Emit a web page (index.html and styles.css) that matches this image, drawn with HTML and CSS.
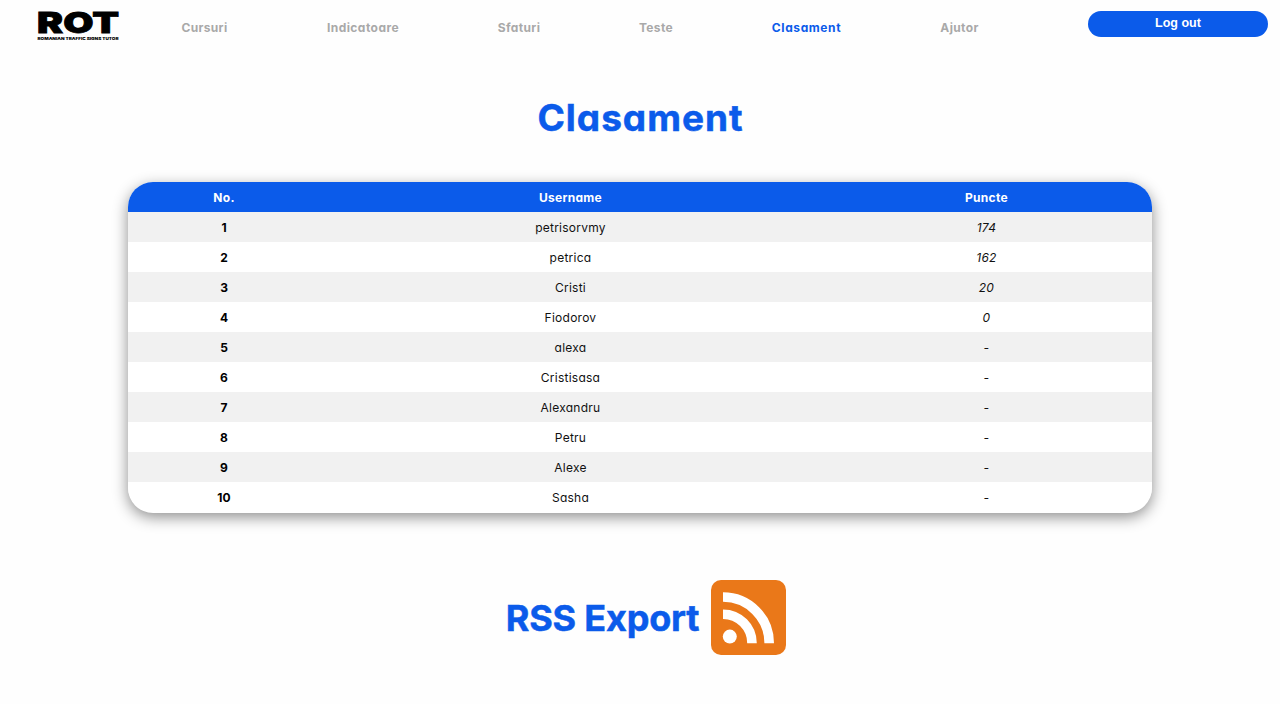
FILE: index.html
```html
<!DOCTYPE html>
<html lang="ro">
<head>
<meta charset="utf-8">
<title>Clasament</title>
<link rel="stylesheet" href="styles.css">
</head>
<body>
<header class="topbar">
  <svg class="logo" width="84" height="44" viewBox="0 -11 84 44" role="img" aria-label="ROT">
    <text class="logo-name" x="0" y="21.500" textLength="82" lengthAdjust="spacingAndGlyphs">ROT</text>
    <text class="logo-tag" x="0.500" y="28.500" textLength="81" lengthAdjust="spacingAndGlyphs">ROMANIAN TRAFFIC SIGNS TUTOR</text>
  </svg>
  <nav class="menu">
    <a class="link w-cursuri">Cursuri</a>
    <a class="link w-indicatoare">Indicatoare</a>
    <a class="link w-sfaturi">Sfaturi</a>
    <a class="link w-teste">Teste</a>
    <a class="link w-clasament active">Clasament</a>
    <a class="link w-ajutor">Ajutor</a>
  </nav>
  <button class="logout">Log out</button>
</header>
<main class="page">
  <h1 class="title">Clasament</h1>
  <table class="ranking">
    <thead><tr><th class="col-no">No.</th><th class="col-user">Username</th><th class="col-points">Puncte</th></tr></thead>
    <tbody>
      <tr><th>1</th><td>petrisorvmy</td><td class="points">174</td></tr>
      <tr><th>2</th><td>petrica</td><td class="points">162</td></tr>
      <tr><th>3</th><td>Cristi</td><td class="points">20</td></tr>
      <tr><th>4</th><td>Fiodorov</td><td class="points">0</td></tr>
      <tr><th>5</th><td>alexa</td><td class="points">-</td></tr>
      <tr><th>6</th><td>Cristisasa</td><td class="points">-</td></tr>
      <tr><th>7</th><td>Alexandru</td><td class="points">-</td></tr>
      <tr><th>8</th><td>Petru</td><td class="points">-</td></tr>
      <tr><th>9</th><td>Alexe</td><td class="points">-</td></tr>
      <tr><th>10</th><td>Sasha</td><td class="points">-</td></tr>
    </tbody>
  </table>
  <a class="export">
    <span class="export-label">RSS Export</span>
    <svg class="rss" width="75" height="75" viewBox="0 0 75 75">
      <rect width="75" height="75" rx="10" fill="#ea7819"/>
      <circle cx="18.8" cy="56.6" r="7" fill="#fff"/>
      <path d="M12 34.2A29 29 0 0 1 41 63.2M12 17A46.200 46.200 0 0 1 58.200 63.200" fill="none" stroke="#fff" stroke-width="9.600"/>
    </svg>
  </a>
</main>
</body>
</html>
```
FILE: styles.css
```css
body {
  margin: 0;
  background: #fefefe;
  font-family: Inter, "Open Sans", sans-serif;
  font-feature-settings: "cv11";
  font-size: 12px;
  color: #111;
}
.topbar {
  display: flex;
  align-items: flex-start;
  height: 60px;
  padding: 0 12px 0 37px;
}
.logo { flex: none; }
.logo-name { font-weight: 900; font-size: 28.5px; fill: #000; stroke: #000; stroke-width: 0.8px; }
.logo-tag { font-weight: 900; font-size: 3.8px; fill: #000; }
.menu { display: flex; gap: 99px; margin: 17px 0 0 60px; }
.link {
  display: flex;
  justify-content: center;
  white-space: nowrap;
  font-weight: 700;
  font-size: 12px;
  line-height: 21px;
  letter-spacing: 0.35px;
  color: #a9a9a9;
}
.w-cursuri { width: 47px; }
.w-indicatoare { width: 72px; letter-spacing: 0.45px; }
.w-sfaturi { width: 42px; }
.w-teste { width: 34px; }
.w-clasament { width: 69px; letter-spacing: 0.6px; }
.w-ajutor { width: 39px; }
.active { color: #0b5bea; }
.logout {
  width: 180px;
  height: 26px;
  margin: 10.5px 0 0 auto;
  padding: 0 0 1px;
  border: 0;
  border-radius: 13px;
  background: #0b5bea;
  color: #fff;
  font: bold 12.5px "Liberation Sans", sans-serif;
}
.page { display: flex; flex-direction: column; align-items: center; }
.title, .export-label {
  margin: 0;
  font-weight: 700;
  font-size: 36px;
  line-height: 54px;
  color: #0b5bea;
  -webkit-text-stroke: 0.5px #0b5bea;
}
.title { margin-top: 31px; font-size: 37px; letter-spacing: 1px; text-indent: 1px; }
.export-label { letter-spacing: -0.2px; }
.ranking {
  width: 1024px;
  margin-top: 37px;
  table-layout: fixed;
  border-collapse: collapse;
  border-radius: 25px;
  overflow: hidden;
  background: #fff;
  text-align: center;
  box-shadow: 0 1px 0 #fff, 0 5px 15px rgba(0, 0, 0, 0.45);
}
.ranking th, .ranking td { height: 29px; padding: 1px 0 0; line-height: 20px; }
.ranking td { letter-spacing: 0.25px; }
.ranking th { font-weight: 700; color: #000; }
.ranking thead th { background: #0b5bea; color: #fff; letter-spacing: 0.3px; }
.ranking tbody tr:nth-child(odd) { background: #f1f1f1; }
.ranking .col-no { width: 192px; }
.ranking .col-user { width: 501px; }
.ranking .col-points { width: 331px; }
.points { font-style: italic; }
.export { display: flex; align-items: center; gap: 12px; margin: 68px 0 0 12px; }
.rss { flex: none; }
```
